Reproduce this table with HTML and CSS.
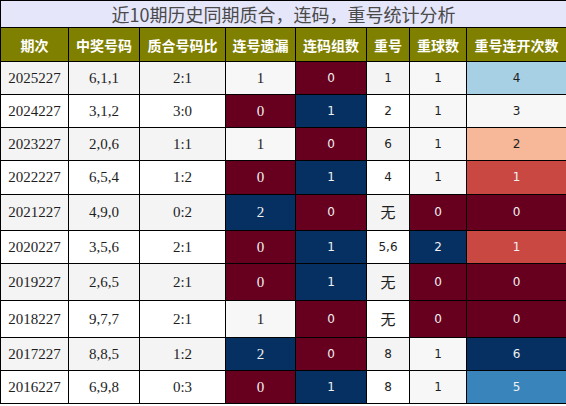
FILE: index.html
```html
<!DOCTYPE html>
<html lang="zh">
<head>
<meta charset="utf-8">
<title>近10期历史同期质合，连码，重号统计分析</title>
<link rel="stylesheet" href="styles.css">
</head>
<body>
<table class="stats">
  <colgroup>
    <col class="w1"><col class="w2"><col class="w3"><col class="w4">
    <col class="w5"><col class="w6"><col class="w7"><col class="w8">
  </colgroup>
  <thead>
    <tr><th class="title" colspan="8">近10期历史同期质合，连码，重号统计分析</th></tr>
    <tr class="head">
      <th>期次</th><th>中奖号码</th><th>质合号码比</th><th>连号遗漏</th>
      <th>连码组数</th><th>重号</th><th>重球数</th><th>重号连开次数</th>
    </tr>
  </thead>
  <tbody>
    <tr class="odd"><td>2025227</td><td>6,1,1</td><td>2:1</td><td class="mid">1</td><td class="s red">0</td><td class="s">1</td><td class="s mid">1</td><td class="s g4">4</td></tr>
    <tr><td>2024227</td><td>3,1,2</td><td>3:0</td><td class="red">0</td><td class="s blue">1</td><td class="s">2</td><td class="s mid">1</td><td class="s mid">3</td></tr>
    <tr class="odd"><td>2023227</td><td>2,0,6</td><td>1:1</td><td class="mid">1</td><td class="s red">0</td><td class="s">6</td><td class="s mid">1</td><td class="s g2">2</td></tr>
    <tr><td>2022227</td><td>6,5,4</td><td>1:2</td><td class="red">0</td><td class="s blue">1</td><td class="s">4</td><td class="s mid">1</td><td class="s g1">1</td></tr>
    <tr class="odd tall"><td>2021227</td><td>4,9,0</td><td>0:2</td><td class="blue">2</td><td class="s red">0</td><td class="cjk">无</td><td class="s red">0</td><td class="s red">0</td></tr>
    <tr><td>2020227</td><td>3,5,6</td><td>2:1</td><td class="red">0</td><td class="s blue">1</td><td class="s">5,6</td><td class="s blue">2</td><td class="s g1">1</td></tr>
    <tr class="odd tall"><td>2019227</td><td>2,6,5</td><td>2:1</td><td class="red">0</td><td class="s blue">1</td><td class="cjk">无</td><td class="s red">0</td><td class="s red">0</td></tr>
    <tr class="tall"><td>2018227</td><td>9,7,7</td><td>2:1</td><td class="mid">1</td><td class="s red">0</td><td class="cjk">无</td><td class="s red">0</td><td class="s red">0</td></tr>
    <tr class="odd"><td>2017227</td><td>8,8,5</td><td>1:2</td><td class="blue">2</td><td class="s red">0</td><td class="s">8</td><td class="s mid">1</td><td class="s blue">6</td></tr>
    <tr><td>2016227</td><td>6,9,8</td><td>0:3</td><td class="red">0</td><td class="s blue">1</td><td class="s">8</td><td class="s mid">1</td><td class="s g5">5</td></tr>
  </tbody>
</table>
</body>
</html>
```

FILE: styles.css
```css
html, body {
  margin: 0;
  padding: 0;
  background: #ffffff;
}

.stats {
  width: 566px;
  border-collapse: collapse;
  table-layout: fixed;
  font-family: "Liberation Serif", "Noto Sans CJK SC", serif;
  font-size: 15px;
  color: #1e1e1e;
}

.w1 { width: 68px; }
.w2 { width: 71px; }
.w3 { width: 86px; }
.w4 { width: 70px; }
.w5 { width: 71px; }
.w6 { width: 43px; }
.w7 { width: 57px; }
.w8 { width: 100px; }

.stats th,
.stats td {
  border: 1px solid #000;
  padding: 0;
  text-align: center;
  vertical-align: middle;
}

.stats th.title {
  height: 26px;
  background: #e6e6fa;
  color: #4a4a4a;
  font-family: "Noto Sans CJK SC", sans-serif;
  font-weight: normal;
  font-size: 18px;
  line-height: 26px;
}

.head th {
  height: 33px;
  background: #808000;
  color: #ffffff;
  font-family: "Noto Sans CJK SC", sans-serif;
  font-weight: bold;
  font-size: 14px;
  line-height: 20px;
}

.stats td {
  height: 32.15px;
  line-height: 18px;
  background: #ffffff;
}

.stats tr.odd td {
  background: #f4f4f4;
}

.stats tr.tall td {
  height: 35.65px;
}

.stats td.s {
  font-family: "DejaVu Sans", sans-serif;
  font-size: 12px;
}

.stats td.cjk {
  font-family: "Noto Sans CJK SC", sans-serif;
  font-size: 15px;
}

.stats tr td.red { background: #67001f; color: #f1f1f1; }
.stats tr td.blue { background: #053061; color: #f1f1f1; }
.stats tr td.mid { background: #f7f7f7; color: #1e1e1e; }
.stats tr td.g1 { background: #ca4842; color: #f1f1f1; }
.stats tr td.g2 { background: #f7b799; color: #1e1e1e; }
.stats tr td.g4 { background: #a7d0e4; color: #1e1e1e; }
.stats tr td.g5 { background: #3884bb; color: #f1f1f1; }
```
